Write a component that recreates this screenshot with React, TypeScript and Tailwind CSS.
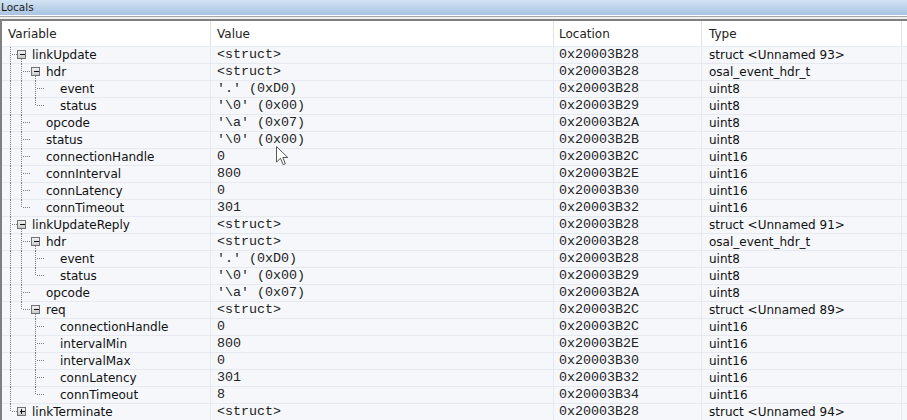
import React from 'react';

type Kind = 'open' | 'closed' | 'leaf';
type Row = { level: number; name: string; value: string; loc: string; type: string; kind: Kind };

const rows: Row[] = [
  { level: 0, name: 'linkUpdate', value: '<struct>', loc: '0x20003B28', type: 'struct <Unnamed 93>', kind: 'open' },
  { level: 1, name: 'hdr', value: '<struct>', loc: '0x20003B28', type: 'osal_event_hdr_t', kind: 'open' },
  { level: 2, name: 'event', value: "'.' (0xD0)", loc: '0x20003B28', type: 'uint8', kind: 'leaf' },
  { level: 2, name: 'status', value: "'\\0' (0x00)", loc: '0x20003B29', type: 'uint8', kind: 'leaf' },
  { level: 1, name: 'opcode', value: "'\\a' (0x07)", loc: '0x20003B2A', type: 'uint8', kind: 'leaf' },
  { level: 1, name: 'status', value: "'\\0' (0x00)", loc: '0x20003B2B', type: 'uint8', kind: 'leaf' },
  { level: 1, name: 'connectionHandle', value: '0', loc: '0x20003B2C', type: 'uint16', kind: 'leaf' },
  { level: 1, name: 'connInterval', value: '800', loc: '0x20003B2E', type: 'uint16', kind: 'leaf' },
  { level: 1, name: 'connLatency', value: '0', loc: '0x20003B30', type: 'uint16', kind: 'leaf' },
  { level: 1, name: 'connTimeout', value: '301', loc: '0x20003B32', type: 'uint16', kind: 'leaf' },
  { level: 0, name: 'linkUpdateReply', value: '<struct>', loc: '0x20003B28', type: 'struct <Unnamed 91>', kind: 'open' },
  { level: 1, name: 'hdr', value: '<struct>', loc: '0x20003B28', type: 'osal_event_hdr_t', kind: 'open' },
  { level: 2, name: 'event', value: "'.' (0xD0)", loc: '0x20003B28', type: 'uint8', kind: 'leaf' },
  { level: 2, name: 'status', value: "'\\0' (0x00)", loc: '0x20003B29', type: 'uint8', kind: 'leaf' },
  { level: 1, name: 'opcode', value: "'\\a' (0x07)", loc: '0x20003B2A', type: 'uint8', kind: 'leaf' },
  { level: 1, name: 'req', value: '<struct>', loc: '0x20003B2C', type: 'struct <Unnamed 89>', kind: 'open' },
  { level: 2, name: 'connectionHandle', value: '0', loc: '0x20003B2C', type: 'uint16', kind: 'leaf' },
  { level: 2, name: 'intervalMin', value: '800', loc: '0x20003B2E', type: 'uint16', kind: 'leaf' },
  { level: 2, name: 'intervalMax', value: '0', loc: '0x20003B30', type: 'uint16', kind: 'leaf' },
  { level: 2, name: 'connLatency', value: '301', loc: '0x20003B32', type: 'uint16', kind: 'leaf' },
  { level: 2, name: 'connTimeout', value: '8', loc: '0x20003B34', type: 'uint16', kind: 'leaf' },
  { level: 0, name: 'linkTerminate', value: '<struct>', loc: '0x20003B28', type: 'struct <Unnamed 94>', kind: 'closed' },
];

// is this row the last child of its parent?
const isLast = rows.map((r, i) => {
  for (let j = i + 1; j < rows.length; j++) {
    if (rows[j].level < r.level) return true;
    if (rows[j].level === r.level) return false;
  }
  return true;
});

// for each row, which ancestor levels still continue below
const guides = rows.map((r, i) => {
  const out: number[] = [];
  for (let a = 0; a < r.level; a++) {
    let k = i;
    while (k >= 0 && rows[k].level !== a) k--;
    if (k >= 0 && !isLast[k]) out.push(a);
  }
  return out;
});

const vx = (l: number) => (l === 0 ? 8.5 : 5.5 + 14 * l);
const dot = { stroke: '#7c7c7c', strokeWidth: 1, strokeDasharray: '1 1' };

function TreeLines({ row, last, g }: { row: Row; last: boolean; g: number[] }) {
  const L = row.level;
  const w = 30 + 14 * L;
  const x = vx(L);
  const cx = vx(L + 1);
  const cy = 7.5;
  return (
    <svg width={w} height={17} className="block shrink-0 overflow-visible" shapeRendering="crispEdges">
      {g.map((a) => (
        <line key={a} x1={vx(a)} y1={0} x2={vx(a)} y2={17} {...dot} />
      ))}
      <line x1={x} y1={0} x2={x} y2={last ? cy : 17} {...dot} />
      {row.kind === 'leaf' ? (
        <line x1={x + 1} y1={cy} x2={x + 8} y2={cy} {...dot} />
      ) : (
        <>
          <line x1={x + 1} y1={cy} x2={cx - 4} y2={cy} {...dot} />
          {row.kind === 'open' && <line x1={cx} y1={12} x2={cx} y2={17} {...dot} />}
          <defs>
            <linearGradient id="boxg" x1="0" y1="0" x2="0" y2="1">
              <stop offset="0" stopColor="#f4f4f4" />
              <stop offset="1" stopColor="#c8c8c8" />
            </linearGradient>
          </defs>
          <rect x={cx - 4} y={3.5} width={8} height={8} fill="url(#boxg)" stroke="#6f7173" />
          <line x1={cx - 2} y1={cy} x2={cx + 3} y2={cy} stroke="#111" />
          {row.kind === 'closed' && <line x1={cx} y1={5} x2={cx} y2={10} stroke="#111" />}
        </>
      )}
    </svg>
  );
}

const Cursor = () => (
  <svg width="13" height="20" viewBox="0 0 13 20" className="absolute left-[276px] top-[146px]">
    <path d="M0.5 0.5 L0.5 16 L4.5 12.3 L7.2 18.6 L9.4 17.7 L6.8 11.5 L11.8 11.5 Z" fill="#ffffff" stroke="#555" strokeWidth="1" />
  </svg>
);

export default function App() {
  const sans = "font-['DejaVu_Sans',sans-serif]";
  const mono = "font-['Liberation_Mono',monospace]";
  return (
    <div className={`relative w-[907px] h-[420px] overflow-hidden bg-[#f0f0f0] ${sans}`}>
      <div className="h-[15px] bg-gradient-to-b from-[#d3e3f4] to-[#a8c3e1] pl-[1px] text-[10.5px] leading-[15px] text-[#1c1c1c]">Locals</div>
      <div className="h-px bg-white" />
      <div className="h-px bg-[#a9a9a9]" />
      <div className="h-[2px] bg-[#f0f0f0]" />
      <div className="border-t-2 border-l-2 border-[#7f7f7f] bg-[#f5f7fb]">
        <div className="grid grid-cols-[209px_343px_148px_200px_1fr] h-[26px] bg-white border-b border-[#e8ebf0] text-[12px] text-[#222]">
          <div className="border-r border-[#e2e2e2] pl-[6px] flex items-center">Variable</div>
          <div className="border-r border-[#e2e2e2] pl-[6px] flex items-center">Value</div>
          <div className="border-r border-[#e2e2e2] pl-[5px] flex items-center">Location</div>
          <div className="border-r border-[#e2e2e2] pl-[7px] flex items-center">Type</div>
          <div />
        </div>
        {rows.map((r, i) => (
          <div key={i} className="grid grid-cols-[209px_343px_148px_200px_1fr] h-[17px] text-[#111]">
            <div className="h-[17px] border-r border-b border-[#e6e9ef] flex items-start overflow-visible">
              <TreeLines row={r} last={isLast[i]} g={guides[i]} />
              <span className="text-[12px] leading-[16px] whitespace-nowrap">{r.name}</span>
            </div>
            <div className={`h-[17px] border-r border-b border-[#e6e9ef] pl-[6px] text-[13.33px] leading-[16px] whitespace-pre text-[#222] ${mono}`}>{r.value}</div>
            <div className={`h-[17px] border-r border-b border-[#e6e9ef] pl-[5px] text-[13.33px] leading-[16px] text-[#222] ${mono}`}>{r.loc}</div>
            <div className="h-[17px] border-r border-b border-[#e6e9ef] pl-[7px] text-[12px] leading-[16px] whitespace-nowrap">{r.type}</div>
            <div className="h-[17px] border-b border-[#e6e9ef]" />
          </div>
        ))}
      </div>
      <Cursor />
    </div>
  );
}
